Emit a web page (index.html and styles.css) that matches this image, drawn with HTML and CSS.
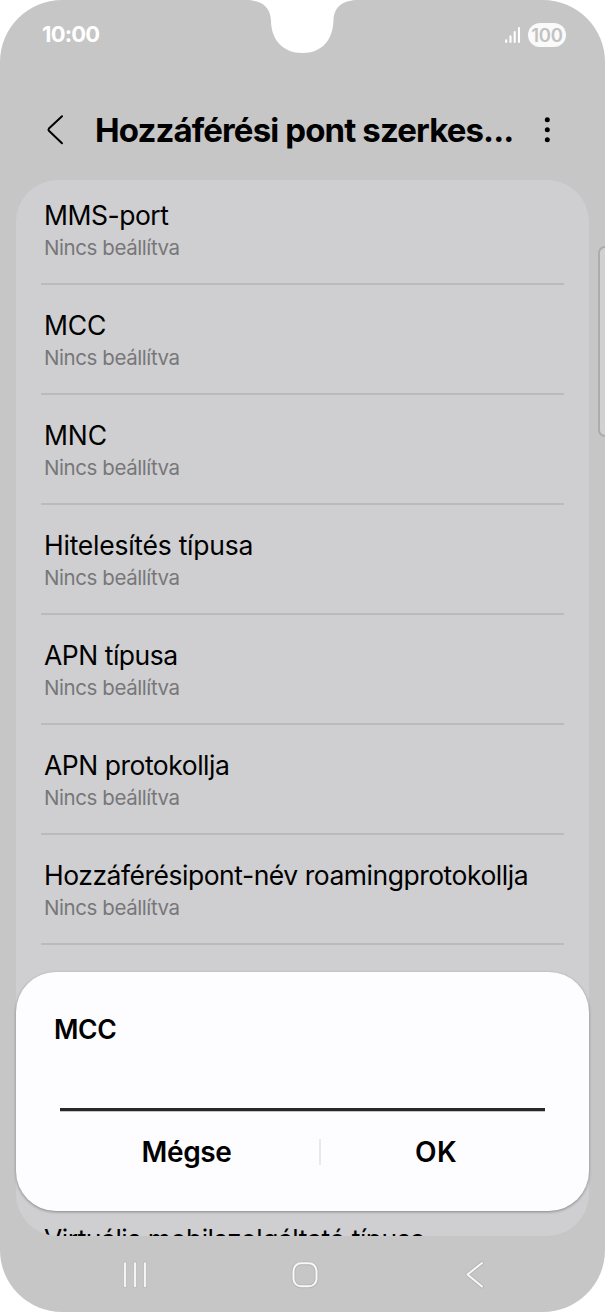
FILE: index.html
```html
<!DOCTYPE html>
<html lang="hu">
<head>
<meta charset="utf-8">
<title>Hozzáférési pont szerkesztése</title>
<link rel="stylesheet" href="styles.css">
</head>
<body>
<div class="phone">
  <svg class="notch" width="112" height="54" viewBox="0 0 112 54"><path d="M0 0C15 0 24 6 25 20C25 40 37 53 56.500 53C76 53 87 40 87.500 20C88 6 98 0 112 0Z" fill="#fff"/></svg>
  <header class="status">
    <span class="clock">10:00</span>
    <div class="indicators">
      <svg width="16" height="18" viewBox="0 0 16 18" stroke="#fff" stroke-width="2.100" stroke-linecap="round"><path d="M1.200 14.300V16M5.500 10.400V16M9.700 6V16M14 2V16"/></svg>
      <span class="battery">100</span>
    </div>
  </header>
  <div class="appbar">
    <svg class="back" width="18" height="32" viewBox="0 0 18 32" fill="none" stroke="#000" stroke-width="2" stroke-linecap="round" stroke-linejoin="round"><path d="M16 2.300L2.900 14.600Q2 15.700 2.900 16.800L16 29.200"/></svg>
    <h1 class="title">Hozzáférési pont szerkes...</h1>
    <svg class="more" width="8" height="28" viewBox="0 0 8 28"><circle cx="4.300" cy="3.700" r="2.500"/><circle cx="4.300" cy="13.700" r="2.500"/><circle cx="4.300" cy="23.700" r="2.500"/></svg>
  </div>
  <main class="list">
    <div class="row first"><div class="name">MMS-port</div><div class="value">Nincs beállítva</div></div>
    <div class="row"><div class="name short">MCC</div><div class="value">Nincs beállítva</div></div>
    <div class="row"><div class="name short">MNC</div><div class="value">Nincs beállítva</div></div>
    <div class="row"><div class="name loose">Hitelesítés típusa</div><div class="value">Nincs beállítva</div></div>
    <div class="row"><div class="name">APN típusa</div><div class="value">Nincs beállítva</div></div>
    <div class="row"><div class="name">APN protokollja</div><div class="value">Nincs beállítva</div></div>
    <div class="row"><div class="name">Hozzáférésipont-név roamingprotokollja</div><div class="value">Nincs beállítva</div></div>
    <div class="row last"><div class="name">Virtuális mobilszolgáltató típusa</div></div>
  </main>
  <nav class="navbar">
    <svg width="28" height="30" viewBox="0 0 28 30" fill="none" stroke-linecap="round"><path d="M4 3.500V26M14 3.500V26M24 3.500V26" stroke="#b5b5b5" stroke-width="4"/><path d="M4 3.500V26M14 3.500V26M24 3.500V26" stroke="#f4f4f4" stroke-width="2.400"/></svg>
    <svg class="home" width="30" height="30" viewBox="0 0 30 30" fill="none"><rect x="3.500" y="3.300" width="23" height="23" rx="7.500" stroke="#b5b5b5" stroke-width="3.800"/><rect x="3.500" y="3.300" width="23" height="23" rx="7.500" stroke="#f8f8f8" stroke-width="2"/></svg>
    <svg width="22" height="30" viewBox="0 0 22 30" fill="none" stroke-linecap="round" stroke-linejoin="round"><path d="M18 3L3.500 14.500L18 26.500" stroke="#b5b5b5" stroke-width="3.800"/><path d="M18 3L3.500 14.500L18 26.500" stroke="#f8f8f8" stroke-width="2"/></svg>
  </nav>
  <div class="edge-panel"></div>
  <section class="dialog">
    <h2 class="dialog-title">MCC</h2>
    <div class="field"></div>
    <div class="actions"><span class="cancel">Mégse</span><i class="separator"></i><span class="ok">OK</span></div>
  </section>
</div>
</body>
</html>
```
FILE: styles.css
```css
* { box-sizing: border-box; }
body { margin: 0; background: #fff; font-family: Inter, "Liberation Sans", sans-serif; color: #000; }
.phone { position: relative; width: 605px; height: 1312px; overflow: hidden; display: flex; flex-direction: column; background: #c6c6c6; border-radius: 62px; }
.notch { position: absolute; left: 246px; top: 0; }
.status { height: 70px; padding: 0 39px 0 42px; display: flex; justify-content: space-between; align-items: center; color: #fff; }
.clock { font-size: 22px; font-weight: 700; line-height: 26px; letter-spacing: -0.8px; margin-top: -2px; }
.indicators { display: flex; align-items: center; gap: 7px; }
.battery { width: 38px; height: 24px; border-radius: 12px; background: #fafafa; color: #c2c2c2; font-size: 18.500px; font-weight: 600; line-height: 24px; text-align: center; letter-spacing: -0.3px; }
.appbar { height: 110px; padding: 9px 54px 0 46px; display: flex; align-items: center; }
.back { flex: none; margin-top: 1px; }
.title { margin: 1px 0 0 31px; flex: 1; font-size: 33px; line-height: 44px; font-weight: 700; white-space: nowrap; letter-spacing: -0.88px; }
.more { flex: none; }
.list { flex: none; height: 1056px; margin: 0 16px; padding: 0 25px; overflow: hidden; border-radius: 42px; background: #cfcfd1; }
.row { height: 110px; padding: 23px 0 0 3px; border-bottom: 2px solid #bbbbbd; white-space: nowrap; }
.row.first { height: 105px; padding-top: 18px; }
.row.last { border: 0; margin-top: 254px; }
.name { font-size: 26.500px; line-height: 34px; letter-spacing: -0.48px; }
.name.loose { letter-spacing: -0.24px; }
.name.short { letter-spacing: -0.1px; }
.value { font-size: 20.500px; line-height: 26px; margin-top: 3px; color: #777779; letter-spacing: -0.42px; }
.navbar { height: 76px; padding: 2px 119px 0 121px; display: flex; justify-content: space-between; align-items: center; }
.home { margin-right: 4px; }
.edge-panel { position: absolute; left: 598px; top: 246px; width: 14px; height: 191px; border: 2px solid #acacac; border-radius: 7px; background: #d1d1d1; }
.dialog { position: absolute; left: 16px; top: 972px; width: 573px; height: 239px; border-radius: 40px; background: #fdfdff; box-shadow: 0 1px 3px rgba(0,0,0,.35); padding: 40px 44px 0; }
.dialog-title { margin: 0 0 0 -6px; font-size: 26.500px; line-height: 34px; font-weight: 600; letter-spacing: -0.4px; }
.field { height: 65px; border-bottom: 3px solid #262829; box-shadow: 0 1px #c4c6c4; }
.actions { display: flex; align-items: center; height: 81px; font-size: 28px; font-weight: 600; text-align: center; }
.cancel { flex: none; width: 253px; letter-spacing: -0.4px; }
.separator { flex: none; width: 2px; height: 26px; margin-left: 6px; background: #e9e9eb; }
.ok { flex: none; width: 230px; letter-spacing: 0.3px; }
```
